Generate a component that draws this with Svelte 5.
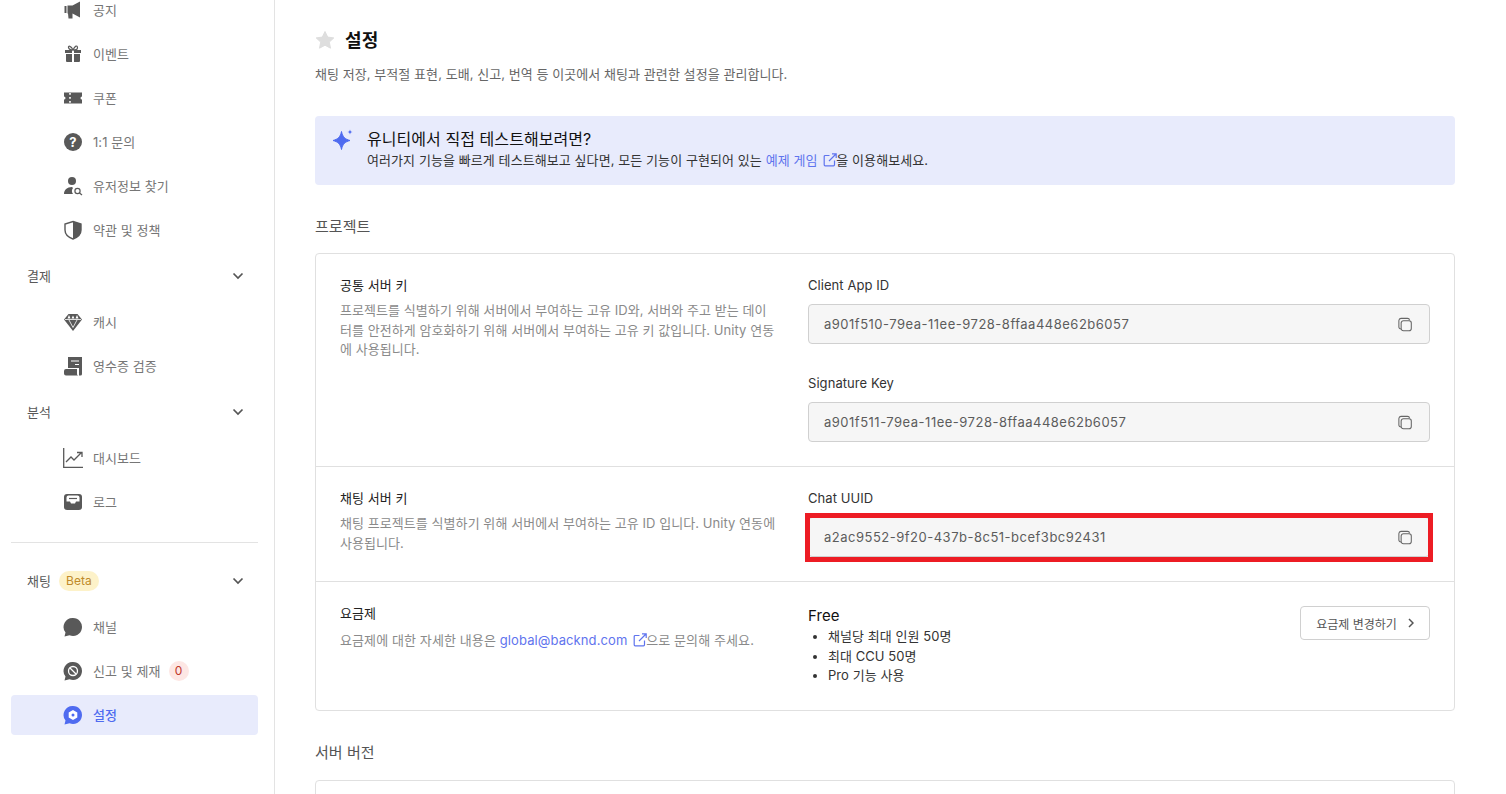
<script>
	const keys = [
		{ label: 'Client App ID', value: 'a901f510-79ea-11ee-9728-8ffaa448e62b6057' },
		{ label: 'Signature Key', value: 'a901f511-79ea-11ee-9728-8ffaa448e62b6057' }
	];
	const plan = ['채널당 최대 인원 50명', '최대 CCU 50명', 'Pro 기능 사용'];
</script>

{#snippet chevron()}
	<svg class="chevron" viewBox="0 0 12 8" width="12" height="8"><path d="M1.5 1.5 6 6l4.5-4.5" fill="none" stroke="#555" stroke-width="1.7" /></svg>
{/snippet}

{#snippet external()}
	<svg class="external" viewBox="0 0 14 14" width="14" height="14" fill="none" stroke="currentColor" stroke-width="1.2"><path d="M6.5 2.5H2.2a1 1 0 0 0-1 1v8.3a1 1 0 0 0 1 1h8.3a1 1 0 0 0 1-1V7.5" /><path d="M6 8l7-7M9 .8h4.2V5" /></svg>
{/snippet}

{#snippet copy()}
	<svg class="copy" viewBox="0 0 16 16" width="14" height="15" fill="none" stroke="#666" stroke-width="1.2"><rect x="3.6" y="3.6" width="11.6" height="11.6" rx="2.6" /><path d="M3.4 13.2A2.4 2.4 0 0 1 1 10.8V3.4A2.6 2.6 0 0 1 3.4 1h7.4a2.4 2.4 0 0 1 2.4 2.2" /></svg>
{/snippet}

{#snippet field(label, value)}
	<div class="field">
		<div class="field-label">{label}</div>
		<div class="input">
			<span>{value}</span>
			{@render copy()}
		</div>
	</div>
{/snippet}

<div class="page">
	<aside class="sidebar">
		<nav class="menu">
			<a class="item">
				<svg viewBox="0 0 20 20" width="20" height="20"><path d="M1.5 6h2v7h-2zM4.5 5.500h5L17 1.500v16l-7.500-4v5h-4l-.5-5h-.5z" fill="#595959" /></svg>
				<span>공지</span>
			</a>
			<a class="item">
				<svg viewBox="0 0 20 20" width="20" height="20"><path d="M2 6h7v3H2zM11 6h7v3h-7zM3 10h6v8H4a1 1 0 0 1-1-1zM11 10h6v7a1 1 0 0 1-1 1h-5z" fill="#595959" /><path d="M10 6C8 1.500 5 1.500 5.500 3.500S8 6 10 6c2 0 4.800 0 4.500-2.500S12 1.500 10 6z" fill="none" stroke="#595959" stroke-width="1.200" /></svg>
				<span>이벤트</span>
			</a>
			<a class="item">
				<svg viewBox="0 0 20 20" width="20" height="20"><path d="M1 4.500h18v4a1.500 1.500 0 0 0 0 3v4H1v-4a1.500 1.500 0 0 0 0-3z" fill="#595959" /><path d="M7 5v1.800M7 9v1.800M7 13v1.800" stroke="#fff" stroke-width="1.600" /></svg>
				<span>쿠폰</span>
			</a>
			<a class="item">
				<svg viewBox="0 0 20 20" width="20" height="20"><circle cx="10" cy="10" r="9" fill="#595959" /><text x="10" y="14.500" text-anchor="middle" font-size="13" font-weight="700" fill="#fff" font-family="Inter, sans-serif">?</text></svg>
				<span>1:1 문의</span>
			</a>
			<a class="item">
				<svg viewBox="0 0 20 20" width="20" height="20"><circle cx="9" cy="5" r="4" fill="#595959" /><path d="M1 18c0-4 3-7 8-7l1 1a5 5 0 0 0 0 6z" fill="#595959" /><circle cx="14.500" cy="15" r="2.600" fill="none" stroke="#595959" stroke-width="1.200" /><path d="M16.500 17l2.500 2" stroke="#595959" stroke-width="1.200" /></svg>
				<span>유저정보 찾기</span>
			</a>
			<a class="item">
				<svg viewBox="0 0 20 20" width="20" height="20"><path d="M10 1.500l8 2.500v6c0 4.200-3.300 7.300-8 9-4.700-1.700-8-4.800-8-9V4z" fill="none" stroke="#595959" stroke-width="1.400" /><path d="M10 1.500l8 2.500v6c0 4.200-3.300 7.300-8 9z" fill="#595959" /></svg>
				<span>약관 및 정책</span>
			</a>

			<div class="group"><span>결제</span>{@render chevron()}</div>
			<a class="item">
				<svg viewBox="0 0 20 20" width="20" height="20"><path d="M5.500 2h9L19 7.500 10 19 1 7.500z" fill="#595959" /><path d="M2 7.500h16M6 8l4 7.500L14 8" fill="none" stroke="#fff" stroke-width=".8" /><path d="M6 3 4.500 6.500h3zM10 3.500 8.500 6.500h3zM14 3l-1.500 3.500h3z" fill="#fff" /></svg>
				<span>캐시</span>
			</a>
			<a class="item">
				<svg viewBox="0 0 20 20" width="20" height="20"><path d="M5 1h14v17a1.500 1.500 0 0 1-1.500 1.500H16V12H5z" fill="#595959" /><path d="M8 5h8M12 8.500h4" stroke="#fff" stroke-width="1.200" /><path d="M3 13h11v4.500a2 2 0 0 0 1 2H3a2 2 0 0 1-2-2V15a2 2 0 0 1 2-2z" fill="#595959" /></svg>
				<span>영수증 검증</span>
			</a>

			<div class="group"><span>분석</span>{@render chevron()}</div>
			<a class="item">
				<svg viewBox="0 0 20 20" width="20" height="20" fill="none" stroke="#595959" stroke-width="1.300"><path d="M.7 0v19.300H20" /><path d="M3 14l5-5 3 3 7-7M14 4.500h5V9" /></svg>
				<span>대시보드</span>
			</a>
			<a class="item">
				<svg viewBox="0 0 20 20" width="20" height="20"><path d="M4 2h12a3 3 0 0 1 3 3v10a3 3 0 0 1-3 3H4a3 3 0 0 1-3-3V5a3 3 0 0 1 3-3z" fill="#595959" /><path d="M3.500 9.500H7l1 2h4l1-2h3.500V5.500a2 2 0 0 0-2-2H5.500a2 2 0 0 0-2 2z" fill="#fff" /><path d="M6 6.500h8" stroke="#595959" stroke-width="1.200" /></svg>
				<span>로그</span>
			</a>

			<hr />

			<div class="group">
				<span class="group-name">채팅<em class="beta">Beta</em></span>
				{@render chevron()}
			</div>
			<a class="item">
				<svg viewBox="0 0 20 20" width="20" height="20"><path d="M10 1a9 9 0 1 1-3.500 17.300L1.500 19.500l1-4A9 9 0 0 1 10 1z" fill="#595959" /></svg>
				<span>채널</span>
			</a>
			<a class="item">
				<svg viewBox="0 0 20 20" width="20" height="20"><path d="M10 1a9 9 0 1 1-3.500 17.300L1.500 19.500l1-4A9 9 0 0 1 10 1z" fill="#595959" /><circle cx="10" cy="10" r="4.500" fill="none" stroke="#fff" stroke-width="1.300" /><path d="M7 7l6 6" stroke="#fff" stroke-width="1.300" /></svg>
				<span>신고 및 제재</span>
				<em class="count">0</em>
			</a>
			<a class="item active">
				<svg viewBox="0 0 20 20" width="20" height="20"><path d="M10 1a9 9 0 1 1-3.500 17.300L1.500 19.500l1-4A9 9 0 0 1 10 1z" fill="#4f6bf0" /><path d="M10 5l4.300 2.500v5L10 15l-4.300-2.500v-5z" fill="#fff" /><circle cx="10" cy="10" r="1.500" fill="#4f6bf0" /></svg>
				<span>설정</span>
			</a>
		</nav>
	</aside>

	<main class="content">
		<header class="title">
			<svg viewBox="0 0 20 20" width="20" height="20"><path d="M10 1.500l2.700 5.600 6.100.8-4.500 4.200 1.200 6.100L10 15.200l-5.500 3 1.200-6.100L1.200 7.900l6.100-.8z" fill="#dedede" stroke="#dedede" stroke-linejoin="round" /></svg>
			<h1>설정</h1>
		</header>
		<p class="desc">채팅 저장, 부적절 표현, 도배, 신고, 번역 등 이곳에서 채팅과 관련한 설정을 관리합니다.</p>

		<div class="banner">
			<svg viewBox="0 0 22 24" width="22" height="24"><path d="M9.500 3.500c1 5.200 3.300 7.600 8.500 9-5.200 1.400-7.500 3.800-8.500 9-1-5.200-3.300-7.600-8.500-9 5.200-1.400 7.500-3.800 8.500-9z" fill="#4f6bf0" stroke="#4f6bf0" stroke-linejoin="round" /><path d="M18 1.500c.3 1.600 1 2.300 2.500 2.500-1.500.2-2.200.9-2.500 2.500-.3-1.600-1-2.300-2.500-2.500 1.500-.2 2.200-.9 2.500-2.500z" fill="#4f6bf0" /></svg>
			<div>
				<h3>유니티에서 직접 테스트해보려면?</h3>
				<p>여러가지 기능을 빠르게 테스트해보고 싶다면, 모든 기능이 구현되어 있는 <a class="link">예제 게임 {@render external()}</a>을 이용해보세요.</p>
			</div>
		</div>

		<h2>프로젝트</h2>
		<section class="card">
			<div class="row">
				<div class="info">
					<h4>공통 서버 키</h4>
					<p>프로젝트를 식별하기 위해 서버에서 부여하는 고유 ID와, 서버와 주고 받는 데이터를 안전하게 암호화하기 위해 서버에서 부여하는 고유 키 값입니다. Unity 연동에 사용됩니다.</p>
				</div>
				<div class="fields">
					{#each keys as k}
						{@render field(k.label, k.value)}
					{/each}
				</div>
			</div>
			<div class="row">
				<div class="info">
					<h4>채팅 서버 키</h4>
					<p>채팅 프로젝트를 식별하기 위해 서버에서 부여하는 고유 ID 입니다. Unity 연동에 사용됩니다.</p>
				</div>
				<div class="fields">
					<div class="highlighted">
						{@render field('Chat UUID', 'a2ac9552-9f20-437b-8c51-bcef3bc92431')}
						<div class="red-box"></div>
					</div>
				</div>
			</div>
			<div class="row plan">
				<div class="info">
					<h4>요금제</h4>
					<p>요금제에 대한 자세한 내용은 <a class="link">global@backnd.com {@render external()}</a>으로 문의해 주세요.</p>
				</div>
				<div class="plan-body">
					<div class="plan-text">
						<div class="plan-name">Free</div>
						<ul>
							{#each plan as p}
								<li>{p}</li>
							{/each}
						</ul>
					</div>
					<button type="button">요금제 변경하기
						<svg viewBox="0 0 6 10" width="6" height="10"><path d="M1 1l4 4-4 4" fill="none" stroke="#555" stroke-width="1.500" /></svg>
					</button>
				</div>
			</div>
		</section>

		<h2>서버 버전</h2>
		<section class="card stub"></section>
	</main>
</div>

<style>
	:global(body) {
		margin: 0;
		background: #fff;
		overflow: hidden;
	}

	.page {
		display: flex;
		height: 794px;
		overflow: hidden;
		font-family: Inter, "Noto Sans CJK KR", sans-serif;
		font-size: 13px;
		letter-spacing: .06px;
		color: #333;
	}

	.sidebar {
		width: 275px;
		flex: none;
		box-sizing: border-box;
		border-right: 1px solid #e3e3e3;
		padding: 0 16px 0 11px;
	}

	.menu {
		display: flex;
		flex-direction: column;
		gap: 4px;
		margin-top: -10px;
	}

	.item {
		display: flex;
		align-items: center;
		height: 40px;
		padding-left: 53px;
		gap: 10px;
		border-radius: 4px;
		color: #767676;
		font-size: 13px;
	}

	.item span {
		margin-bottom: 2px;
	}

	.item svg {
		margin-left: -1px;
		flex: none;
	}

	.active {
		background: #e8ebfc;
		color: #4f6bf0;
		font-weight: 500;
	}

	.group {
		display: flex;
		align-items: center;
		justify-content: space-between;
		height: 44px;
		padding: 0 14px 0 16px;
		color: #595959;
	}

	.group > span {
		margin-bottom: 2px;
	}

	.group-name {
		display: flex;
		align-items: center;
		gap: 8px;
	}

	.beta {
		font-style: normal;
		font-size: 12px;
		color: #c08a2a;
		background: #fdf2c9;
		border-radius: 10px;
		padding: 0 7px;
		line-height: 20px;
		margin-bottom: -2px;
	}

	.count {
		font-style: normal;
		font-size: 12px;
		color: #c0392b;
		background: #fde7e4;
		border-radius: 50%;
		width: 20px;
		height: 20px;
		line-height: 20px;
		text-align: center;
		margin-left: -2px;
	}

	hr {
		width: 100%;
		border: 0;
		border-top: 1px solid #e3e3e3;
		margin: 16px 0 12px;
	}

	.content {
		flex: 1;
		min-width: 0;
		padding: 0 51px 0 40px;
	}

	.title {
		display: flex;
		align-items: center;
		gap: 10px;
		height: 40px;
		margin-top: 20px;
	}

	h1 {
		margin: 0 0 2px;
		font-size: 18px;
		font-weight: 700;
		letter-spacing: .3px;
		color: #111;
	}

	.desc {
		margin: 4px 0 0;
		font-size: 13px;
		line-height: 20px;
		color: #666;
	}

	.banner {
		display: flex;
		gap: 13px;
		height: 69px;
		box-sizing: border-box;
		margin-top: 32px;
		padding: 12px 17px;
		background: #e8ebfc;
		border-radius: 4px;
	}

	.banner h3 {
		margin: 0;
		font-size: 16px;
		font-weight: 400;
		line-height: 22px;
		color: #111;
	}

	.banner p {
		margin: 0;
		font-size: 13px;
		line-height: 20px;
		letter-spacing: .08px;
		color: #333;
	}

	.link {
		color: #5f74ee;
	}

	.external {
		vertical-align: -2px;
		margin: 0 -1px 0 2px;
	}

	h2 {
		margin: 32px 0 0;
		height: 20px;
		font-size: 15px;
		line-height: 20px;
		font-weight: 400;
		color: #555;
	}

	.card {
		margin-top: 16px;
		border: 1px solid #e0e0e0;
		border-radius: 4px;
	}

	.stub {
		margin-top: 17px;
		height: 40px;
	}

	.row {
		display: grid;
		grid-template-columns: 436px 1fr;
		column-gap: 32px;
		padding: 22px 24px 24px;
		border-top: 1px solid #e0e0e0;
	}

	.row:first-child {
		border-top: 0;
	}

	.plan {
		height: 129px;
		box-sizing: border-box;
		padding-bottom: 0;
	}

	h4 {
		margin: 0;
		font-size: 13px;
		font-weight: 400;
		line-height: 18px;
		color: #222;
	}

	.info p {
		margin: 7px 0 0;
		font-size: 13px;
		line-height: 19.5px;
		color: #8a8a8a;
	}

	.plan .info p {
		margin-top: 9px;
		letter-spacing: .1px;
	}

	.fields {
		display: flex;
		flex-direction: column;
		gap: 30px;
	}

	.field-label {
		font-size: 13px;
		line-height: 18px;
		color: #333;
		margin-bottom: 10px;
	}

	.input {
		display: flex;
		align-items: center;
		justify-content: space-between;
		height: 40px;
		box-sizing: border-box;
		padding: 0 17px 0 15px;
		background: #f6f6f6;
		border: 1px solid #d0d0d0;
		border-radius: 4px;
		font-size: 13px;
		letter-spacing: .5px;
		color: #5c5c5c;
	}

	.highlighted {
		position: relative;
	}

	.red-box {
		position: absolute;
		left: -3px;
		right: -3px;
		bottom: -5px;
		height: 49px;
		box-sizing: border-box;
		border: 5px solid #ed1c24;
	}

	.plan-body {
		display: flex;
		justify-content: space-between;
		align-items: flex-start;
		padding-top: 2px;
	}

	.plan-text {
		padding-top: 1px;
	}

	.plan-name {
		font-size: 15px;
		line-height: 18px;
		color: #111;
	}

	ul {
		margin: 2px 0 0;
		padding-left: 20px;
		font-size: 13px;
		line-height: 19.5px;
		color: #333;
	}

	button {
		display: flex;
		align-items: center;
		justify-content: center;
		gap: 11px;
		width: 130px;
		height: 34px;
		padding: 0;
		background: #fff;
		border: 1px solid #d0d0d0;
		border-radius: 4px;
		font: inherit;
		font-size: 12px;
		letter-spacing: 0;
		color: #555;
	}
</style>
